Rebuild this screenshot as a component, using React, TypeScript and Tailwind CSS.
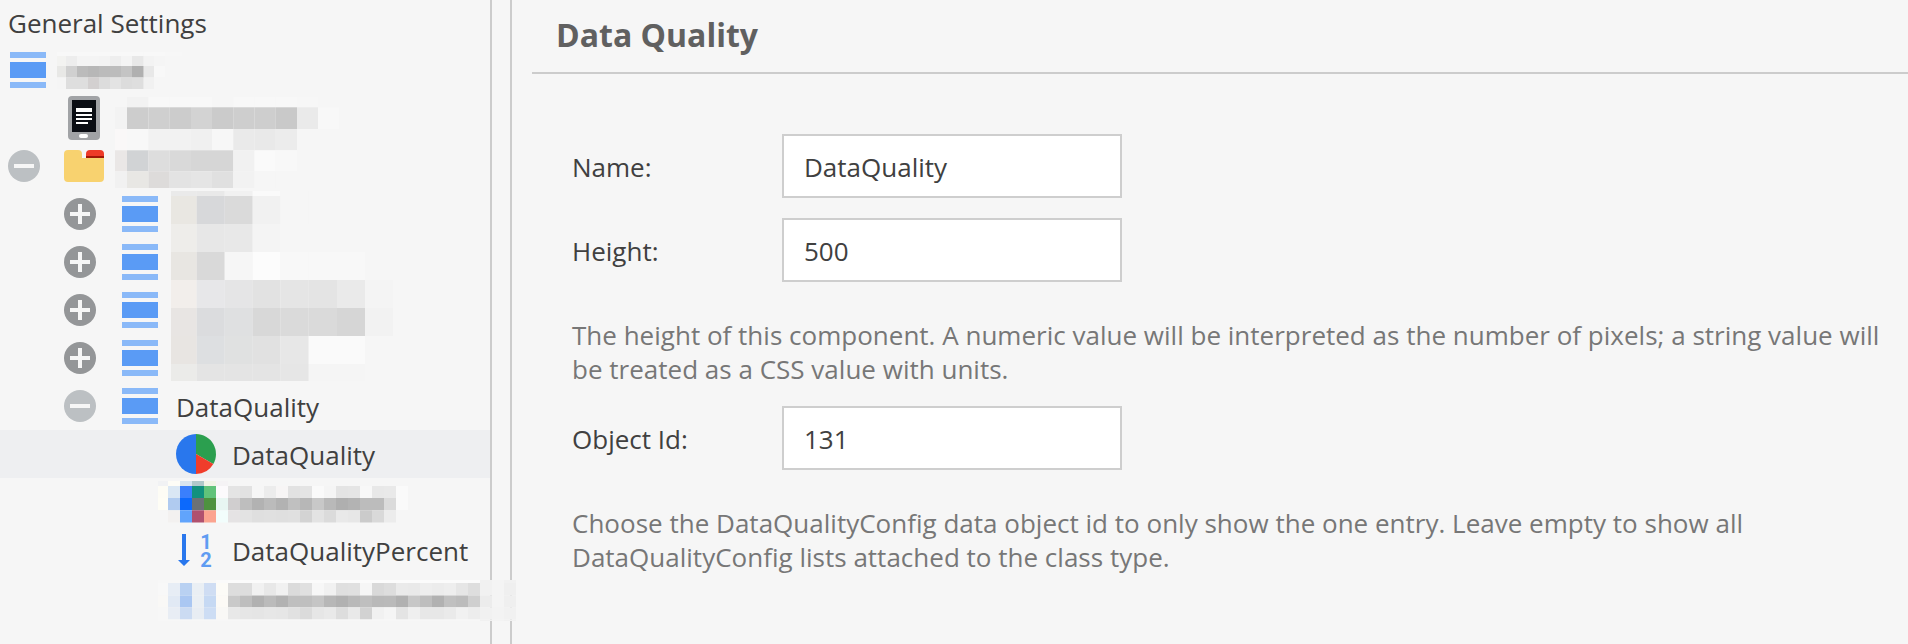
import React from "react";

type MosaicProps = {
  className: string;
  xs: number[];
  ys: number[];
  rows: string[];
};

// Each row lists one shade per column: two digits for a grey, six for a colour, "-" for none.
function Mosaic({ className, xs, ys, rows }: MosaicProps) {
  const x0 = xs[0];
  const y0 = ys[0];
  return (
    <svg
      aria-hidden="true"
      className={"pointer-events-none absolute " + className}
      width={xs[xs.length - 1] - x0}
      height={ys[ys.length - 1] - y0}
    >
      {rows.map((row, r) =>
        row.split(" ").map((c, i) =>
          c === "-" ? null : (
            <rect
              key={r + "-" + i}
              x={xs[i] - x0}
              y={ys[r] - y0}
              width={xs[i + 1] - xs[i]}
              height={ys[r + 1] - ys[r]}
              fill={"#" + (c.length === 2 ? c + c + c : c)}
            />
          )
        )
      )}
    </svg>
  );
}

const steps = (from: number, to: number, step: number) => {
  const out: number[] = [];
  for (let x = from; x <= to; x += step) out.push(x);
  return out;
};

function RegionIcon() {
  return (
    <svg width="36" height="36" className="shrink-0">
      <rect width="36" height="6" fill="#8ab9f8" />
      <rect y="10" width="36" height="16" fill="#5a9bf5" />
      <rect y="30" width="36" height="6" fill="#8ab9f8" />
    </svg>
  );
}

function Toggle({ open }: { open?: boolean }) {
  return (
    <svg width="32" height="32" className="shrink-0">
      <circle cx="16" cy="16" r="16" fill={open ? "#bcc0c3" : "#949698"} />
      <rect x="6" y="14" width="20" height="4" fill="#f6f6f6" />
      {!open && <rect x="14" y="6" width="4" height="20" fill="#f6f6f6" />}
    </svg>
  );
}

function TabletIcon() {
  return (
    <svg width="32" height="44" className="shrink-0">
      <rect width="32" height="44" rx="4" fill="#a1a3a6" />
      <rect x="4" y="4" width="24" height="32" fill="#0b0e14" />
      <path d="M8 12h16v4H8zM8 18h16v2H8zM8 22h16v2H8zM8 26h12v2H8z" fill="#fff" />
      <rect x="11" y="38" width="9" height="4" rx="2" fill="#fff" />
    </svg>
  );
}

function FolderIcon() {
  return (
    <svg width="40" height="32" className="shrink-0">
      <path d="M22 8V4a4 4 0 0 1 4-4h10a4 4 0 0 1 4 4v4z" fill="#ee3a27" />
      <rect x="22" y="6" width="18" height="2" fill="#a11708" />
      <path d="M0 4a4 4 0 0 1 4-4h10a4 4 0 0 1 4 4v4h22v20a4 4 0 0 1-4 4H4a4 4 0 0 1-4-4z" fill="#f8d26f" />
    </svg>
  );
}

function PieIcon() {
  return (
    <svg width="40" height="40" className="shrink-0">
      <path d="M20 0a20 20 0 0 0 0 40z" fill="#2977ed" />
      <path d="M20 20V0a20 20 0 0 1 17.3 30z" fill="#2b9f4f" />
      <path d="M20 20l17.3 10A20 20 0 0 1 20 40z" fill="#f03d2b" />
    </svg>
  );
}

function NumericSortIcon() {
  return (
    <div className="flex h-9 w-10 shrink-0 items-start pl-0.5">
      <svg width="20" height="36" className="shrink-0">
        <path d="M4 2h4v26h4l-6 6-6-6h4z" fill="#2977ed" />
      </svg>
      <div className="flex w-4 flex-col items-center pt-px font-['Roboto',sans-serif] text-[20px] font-bold leading-[18px] text-[#5f9cf2]">
        <span>1</span>
        <span>2</span>
      </div>
    </div>
  );
}

function Row({ className = "", children }: { className?: string; children?: React.ReactNode }) {
  return <div className={"flex h-12 shrink-0 items-center " + className}>{children}</div>;
}

function Label({ children }: { children: React.ReactNode }) {
  return <span className="pt-0.5 whitespace-nowrap">{children}</span>;
}

function Field({ label, value }: { label: string; value: string }) {
  return (
    <div className="flex h-16 items-center">
      <label className="w-[210px] shrink-0 pt-0.5">{label}</label>
      <div className="flex h-16 w-[340px] items-center border-2 border-[#cecece] bg-white px-5 pt-0.5">{value}</div>
    </div>
  );
}

export default function App() {
  return (
    <div className="relative flex h-[644px] w-full overflow-hidden bg-[#f6f6f6] font-['Open_Sans',sans-serif] text-[26px] leading-[34px] text-[#404040]">
      <aside className="flex w-[492px] shrink-0 flex-col border-r-2 border-[#cccccc]">
        <div className="flex h-[46px] shrink-0 items-center pl-2">General Settings</div>
        <Row className="pl-2.5">
          <RegionIcon />
        </Row>
        <Row className="pl-[68px]">
          <TabletIcon />
        </Row>
        <Row className="gap-6 pl-2">
          <Toggle open />
          <FolderIcon />
        </Row>
        {[0, 1, 2, 3].map((n) => (
          <Row key={n} className="gap-[26px] pl-16">
            <Toggle />
            <RegionIcon />
          </Row>
        ))}
        <Row className="pl-16">
          <Toggle open />
          <div className="flex items-center gap-[18px] pl-[26px]">
            <RegionIcon />
            <Label>DataQuality</Label>
          </div>
        </Row>
        <Row className="gap-4 bg-[#eeeff1] pl-44">
          <PieIcon />
          <Label>DataQuality</Label>
        </Row>
        <Row />
        <Row className="gap-4 pl-44">
          <NumericSortIcon />
          <Label>DataQualityPercent</Label>
        </Row>
        <Row />
      </aside>

      <div className="w-5 shrink-0 border-r-2 border-[#cccccc]" />

      <main className="flex flex-1 flex-col pl-5">
        <header className="flex h-[74px] shrink-0 items-center border-b-2 border-[#cccccc] pb-0.5 pl-6">
          <h1 className="text-[32px] font-bold leading-10 text-[#606060]">Data Quality</h1>
        </header>
        <div className="flex flex-col pl-10 pt-[60px]">
          <Field label="Name:" value="DataQuality" />
          <div className="h-5" />
          <Field label="Height:" value="500" />
          <p className="mb-5 mt-9 tracking-[0.01px] text-[#777777]">
            The height of this component. A numeric value will be interpreted as the number of pixels; a string value will
            <br />
            be treated as a CSS value with units.
          </p>
          <Field label="Object Id:" value="131" />
          <p className="mt-9 tracking-[0.01px] text-[#777777]">
            Choose the DataQualityConfig data object id to only show the one entry. Leave empty to show all
            <br />
            DataQualityConfig lists attached to the class type.
          </p>
        </div>
      </main>

      <Mosaic
        className="left-[57px] top-[52px]"
        xs={[57, 66, 77, 88, 99, 110, 121, 132, 143.7, 154, 165, 182]}
        ys={[52, 56, 66, 77.5, 89]}
        rows={[
          "f8 f8 f8 f8 f8 f8 f8 f8 f8 f8 f7",
          "f3f3f1 ed f4 f4 f3 ee f4 e8 f3 f5 f6",
          "e8e8e6 d0 bb b7 bb bc c4 b0 e8 f8 f6",
          "f5 de de d3d0d0 dc e3 dc de f1 f6 f6",
        ]}
      />
      <Mosaic
        className="left-[115px] top-[97px]"
        xs={[115, 127, 148.5, 169.7, 191, 212, 233.3, 254.5, 275.7, 297, 318, 339]}
        ys={[97, 107.3, 129, 150.3, 171.3, 188]}
        rows={[
          "f6 f2 f8 f8 f8 f6 f8 f8 f8 f7 -",
          "f3 cd cf cc d3 cb ce ce c9 ea f8",
          "faf8f8 f8 f2 f2 f0 f7 ea e9 ec - -",
          "eae7e6 d1d3d5 dd d9 d6 d6 f1 fa f8 - -",
          "f1 e8e7e4 dddbda e3 e5 e0 f2 f6 f6 - -",
        ]}
      />
      <Mosaic
        className="left-[171px] top-[191px]"
        xs={[171, 196.7, 224.7, 252.7, 280.3, 308.7, 337, 365, 393]}
        ys={[191, 196, 224, 252, 280, 308, 336, 364, 381]}
        rows={[
          "ea e9 f1 fa f6 - - -",
          "e9e7e2 d7d8da da f1 f6 - - -",
          "eeedea e7 e8 f4 - - - -",
          "e8e6e2 d9 f6 fc f8 f8 f8 -",
          "f2eeeb e7e7e9 e5e5e6 e2 e5 e4 ea f4",
          "e8e5e3 dbdcde dfe0e1 d8 da da d6 f2",
          "e8e5e2 dddfe1 e0e1e1 e1 e7 fa fa -",
          "ebebe9 e4 e4 e4 e6 f5 f5 -",
        ]}
      />
      <Mosaic
        className="left-[158px] top-[481px]"
        xs={[158, ...steps(168, 408, 12)]}
        ys={[481, 486, 498, 510.3, 522.5]}
        rows={[
          "f1f2f4 fdfcf6 d8e4ef b0c8ca f1f4e6 f5f3f5 f6 f6 f6 f6 f6 f6 f6 f6 f6 f6 f6 f6 f6 f6 f6",
          "fdfcf5 dae7f4 3a7ffc 12917e 61c37a fcfafc e4 e2 f6 ec f7f5f5 e2 e4 fa f5 e4 e5 f8 e8 e9 fa",
          "fefdf5 b0cbf0 0c69fc 6c7175 4e923f e8f6f2 d0cecf be b2 bb b2 c0 b7 c8 b9 af b3 bc bc db fa",
          "f6 f3f1f0 61a4fc b0516f fba490 f2fdfc e5e3e4 e3 df e0 df e0 d3 e3 db e9 e7 cb d9 ec f6",
        ]}
      />
      <Mosaic
        className="left-[158px] top-[580px]"
        xs={[158, ...steps(168, 516, 12)]}
        ys={[580, 583, 595.5, 607.3, 619.5, 621]}
        rows={[
          "f7 f7 f7 f7 f7 fa fb fb fb fb fb fb fb fb fb fb fb fb fb fb fb fb fb fb fb fb fb f1 f4 f1",
          "f8 e7edf5 b9d1f2 eaeff4 cfddf3 fcfbf7 dd dd f1 e8 f1 db e0 f7 f1 df e0 f6 d9 dd ea e9 ee ec ee e6 de f1 f4 ef",
          "f9f8f6 e1e9f4 aac7f2 eaeff4 c6d9f3 fcfaf6 c9 be b1 bb b2 bf bf c5 b7 b1 b9 bf b9 ba b1 c7 be b1 c0 bc cf ec f4 ef",
          "f7 e8edf4 cbdbf2 e8edf3 cdddf4 f9f8f6 e8 e6 e5 e7 e6 e1 db e6 e9 dd e9 d2 f1 f5 e4 ef e7 e7 ea f1 ed f1 f3 f1",
          "f7 f7 f7 f7 f7 f7 f7 f7 f7 f7 f7 f7 f7 f7 f7 f7 f7 f7 f7 f7 f7 f7 f7 f7 f7 f7 f7 f1 f3 f1",
        ]}
      />
    </div>
  );
}
